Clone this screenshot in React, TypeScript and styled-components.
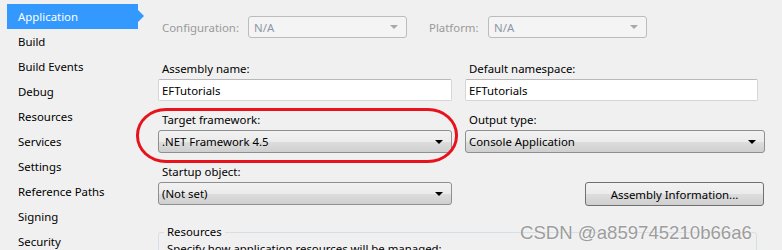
import React from "react";
import styled, { createGlobalStyle } from "styled-components";

const Global = createGlobalStyle`
  html, body { margin: 0; padding: 0; background: #f0f0f0; }
  body { font-family: "Noto Sans", "Open Sans", sans-serif; font-size: 11.4px; color: #000; }
  #root { width: 782px; height: 250px; overflow: hidden; }
`;

const Page = styled.div`
  position: relative;
  display: flex;
  width: 782px;
  height: 250px;
  background: #f0f0f0;
  overflow: hidden;
`;

const Sidebar = styled.nav`
  width: 158px;
  flex: none;
  padding-top: 4px;
  box-sizing: border-box;
  display: flex;
  flex-direction: column;
`;

const NavItem = styled.div<{ $active?: boolean }>`
  position: relative;
  flex: none;
  width: 131px;
  height: 25px;
  margin-left: 7px;
  padding-left: 11px;
  box-sizing: border-box;
  display: flex;
  align-items: center;
  color: ${(p) => (p.$active ? "#fff" : "#000")};
  background: ${(p) => (p.$active ? "#3399ff" : "transparent")};
  &::after {
    content: "";
    display: ${(p) => (p.$active ? "block" : "none")};
    position: absolute;
    right: -6px;
    top: 6px;
    border-left: 6px solid #3399ff;
    border-top: 6px solid transparent;
    border-bottom: 6px solid transparent;
  }
`;

const Main = styled.div`
  flex: 1;
  display: flex;
  flex-direction: column;
  padding-top: 16px;
`;

const TopBar = styled.div`
  display: flex;
  align-items: center;
  height: 22px;
  padding-left: 4px;
`;

const DimLabel = styled.span<{ $w: number }>`
  width: ${(p) => p.$w}px;
  color: #9a9a9a;
`;

const DisabledCombo = styled.div`
  width: 159px;
  height: 22px;
  box-sizing: border-box;
  border: 1px solid #bcbcbc;
  border-radius: 3px;
  background: #f4f4f4;
  color: #8d96a6;
  display: flex;
  align-items: center;
  justify-content: space-between;
  padding: 0 8px 0 5px;
  margin-right: 22px;
`;

const Separator = styled.div`
  height: 1px;
  background: #a0a0a0;
  margin-top: 15px;
`;

const Grid = styled.div`
  display: grid;
  grid-template-columns: 294px 300px;
  column-gap: 13px;
  row-gap: 11px;
  margin-top: 8px;
`;

const Field = styled.div`
  display: flex;
  flex-direction: column;
`;

const Label = styled.div`
  height: 18px;
  line-height: 16px;
  padding-left: 4px;
`;

const TextBox = styled.div<{ $w?: number }>`
  width: ${(p) => (p.$w ? `${p.$w}px` : "100%")};
  height: 22px;
  box-sizing: border-box;
  border: 1px solid #d6d6d6;
  border-top-color: #b9b9b9;
  border-radius: 2px;
  background: #fff;
  display: flex;
  align-items: center;
  padding-left: 3px;
`;

const Combo = styled.div`
  height: 23px;
  box-sizing: border-box;
  border: 1px solid #8e8f8f;
  border-radius: 3px;
  background: linear-gradient(#f2f2f2 0%, #ebebeb 50%, #dddddd 51%, #cfcfcf 100%);
  display: flex;
  align-items: center;
  justify-content: space-between;
  padding: 0 8px 0 3px;
`;

const Arrow = styled.span<{ $dim?: boolean }>`
  width: 0;
  height: 0;
  border-left: 4px solid transparent;
  border-right: 4px solid transparent;
  border-top: 4px solid ${(p) => (p.$dim ? "#a8a8a8" : "#000")};
`;

const ButtonCell = styled.div`
  display: flex;
  justify-content: flex-end;
  align-items: flex-start;
  padding-top: 18px;
  padding-right: 1px;
`;

const Button = styled.div`
  width: 179px;
  height: 24px;
  box-sizing: border-box;
  border: 1px solid #707070;
  border-radius: 3px;
  background: linear-gradient(#f2f2f2 0%, #ebebeb 50%, #dddddd 51%, #cfcfcf 100%);
  display: flex;
  align-items: center;
  justify-content: center;
`;

const Group = styled.fieldset`
  margin: 19px 25px 0 0;
  padding: 0 0 0 5px;
  border: 1px solid #d5dfe5;
  border-radius: 3px;
  height: 40px;
  legend {
    padding: 0 3px;
    margin-left: 0;
    line-height: 14px;
  }
`;

const GroupText = styled.div`
  padding-left: 3px;
  margin-top: 2px;
`;

const Ellipse = styled.div`
  position: absolute;
  left: 136px;
  top: 108px;
  width: 322px;
  height: 55px;
  box-sizing: border-box;
  border: 3px solid #e8121c;
  border-radius: 30px / 27px;
  pointer-events: none;
`;

const Watermark = styled.div`
  position: absolute;
  left: 520px;
  top: 222px;
  font-family: "Liberation Sans", Arial, sans-serif;
  font-size: 18.6px;
  color: #9d9d9d;
  text-shadow: 0 0 2px #fff;
  white-space: nowrap;
  pointer-events: none;
`;

const navItems = [
  "Application",
  "Build",
  "Build Events",
  "Debug",
  "Resources",
  "Services",
  "Settings",
  "Reference Paths",
  "Signing",
  "Security",
];

export default function App() {
  return (
    <>
      <Global />
      <Page>
        <Sidebar>
          {navItems.map((n, i) => (
            <NavItem key={n} $active={i === 0}>
              {n}
            </NavItem>
          ))}
        </Sidebar>
        <Main>
          <TopBar>
            <DimLabel $w={86}>Configuration:</DimLabel>
            <DisabledCombo>
              <span>N/A</span>
              <Arrow $dim />
            </DisabledCombo>
            <DimLabel $w={59}>Platform:</DimLabel>
            <DisabledCombo>
              <span>N/A</span>
              <Arrow $dim />
            </DisabledCombo>
          </TopBar>
          <Separator />
          <Grid>
            <Field>
              <Label>Assembly name:</Label>
              <TextBox>EFTutorials</TextBox>
            </Field>
            <Field>
              <Label>Default namespace:</Label>
              <TextBox $w={293}>EFTutorials</TextBox>
            </Field>
            <Field>
              <Label>Target framework:</Label>
              <Combo>
                <span>.NET Framework 4.5</span>
                <Arrow />
              </Combo>
            </Field>
            <Field>
              <Label>Output type:</Label>
              <Combo>
                <span>Console Application</span>
                <Arrow />
              </Combo>
            </Field>
            <Field>
              <Label>Startup object:</Label>
              <Combo>
                <span>(Not set)</span>
                <Arrow />
              </Combo>
            </Field>
            <ButtonCell>
              <Button>Assembly Information...</Button>
            </ButtonCell>
          </Grid>
          <Group>
            <legend>Resources</legend>
            <GroupText>Specify how application resources will be managed:</GroupText>
          </Group>
        </Main>
        <Ellipse />
        <Watermark>CSDN @a859745210b66a6</Watermark>
      </Page>
    </>
  );
}
